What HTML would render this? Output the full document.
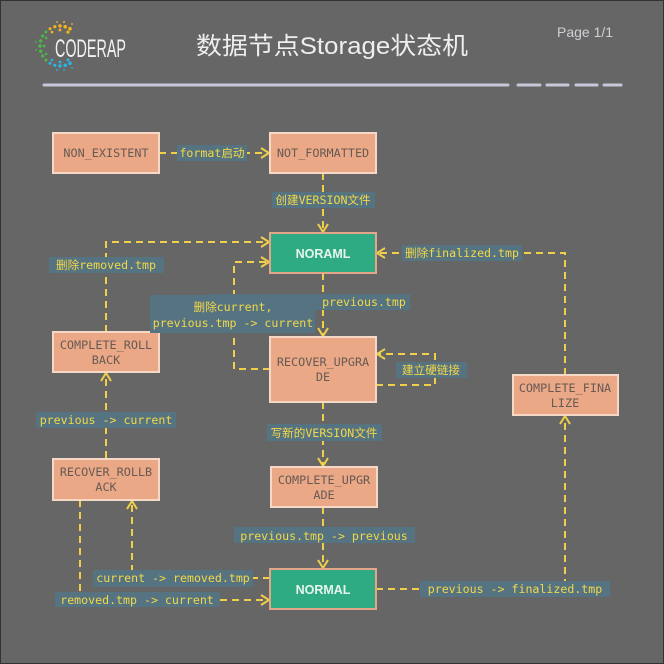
<!DOCTYPE html>
<html><head><meta charset="utf-8"><style>
html,body{margin:0;padding:0;background:#666}
svg{display:block}
.t{font-family:"DejaVu Sans Mono","Liberation Mono","Noto Sans CJK SC",monospace;font-size:11.6px;fill:#f5d848}
.b{font-family:"DejaVu Sans Mono","Liberation Mono",monospace;font-size:11.8px;fill:#665a54}
.g{font-family:"Liberation Sans",sans-serif;font-size:12.5px;font-weight:bold;fill:#e8f5ef}
.l{fill:#557380}
.bx{fill:#eba886;stroke:#f6d8c6;stroke-width:2}
.gb{fill:#2fab83;stroke:#e3a688;stroke-width:2}
.d{fill:none;stroke:#f0d048;stroke-width:2;stroke-dasharray:7 5}
</style></head><body>
<svg width="664" height="664" viewBox="0 0 664 664" xmlns="http://www.w3.org/2000/svg">
<defs>
<marker id="a" markerWidth="12" markerHeight="12" refX="10" refY="6" orient="auto" markerUnits="userSpaceOnUse">
<polyline points="2,1 10,6 2,11" fill="none" stroke="#f0d048" stroke-width="2"/>
</marker>
</defs>
<rect x="0.5" y="0.5" width="663" height="663" fill="#666" stroke="#333"/>
<g>
<g fill="#f2b51c"><circle cx="50" cy="28.7" r="1.5"/><circle cx="54.8" cy="26.7" r="1.6"/><circle cx="60" cy="26" r="1.7"/><circle cx="65.2" cy="26.7" r="1.8"/><circle cx="70" cy="28.7" r="1.8"/><circle cx="52" cy="32.1" r="1.3"/><circle cx="60" cy="30" r="1.4"/><circle cx="68" cy="32.1" r="1.6"/><circle cx="57" cy="22" r="0.9"/><circle cx="64" cy="22" r="1"/><circle cx="72" cy="24" r="0.9"/></g>
<g fill="#4cb848"><circle cx="45.9" cy="31.9" r="1.5"/><circle cx="42.7" cy="36" r="1.6"/><circle cx="40.7" cy="40.8" r="1.7"/><circle cx="40" cy="46" r="1.8"/><circle cx="40.7" cy="51.2" r="1.7"/><circle cx="42.7" cy="56" r="1.6"/><circle cx="45.9" cy="60.1" r="1.5"/><circle cx="46.1" cy="38" r="1.3"/><circle cx="44" cy="46" r="1.4"/><circle cx="46.1" cy="54" r="1.3"/><circle cx="36" cy="42" r="0.9"/><circle cx="36" cy="50" r="0.9"/></g>
<g fill="#2ab4e6"><circle cx="50" cy="63.3" r="1.5"/><circle cx="54.8" cy="65.3" r="1.6"/><circle cx="60" cy="66" r="1.7"/><circle cx="65.2" cy="65.3" r="1.8"/><circle cx="70" cy="63.3" r="1.8"/><circle cx="52" cy="59.9" r="1.3"/><circle cx="60" cy="62" r="1.4"/><circle cx="68" cy="59.9" r="1.5"/><circle cx="57" cy="70" r="0.9"/><circle cx="64" cy="70" r="0.9"/><circle cx="72" cy="68" r="0.9"/></g>
</g>
<text x="55" y="57" font-family="Liberation Sans,sans-serif" font-size="25" fill="#f2f2f2" textLength="71" lengthAdjust="spacingAndGlyphs">CODERAP</text>
<text x="196" y="54" font-family="Liberation Sans,'Noto Sans CJK SC',sans-serif" font-size="24" fill="#eeeeee" textLength="272" lengthAdjust="spacingAndGlyphs">数据节点Storage状态机</text>
<text x="557" y="37" font-family="Liberation Sans,sans-serif" font-size="14" fill="#cfcfd6">Page 1/1</text>
<line x1="44" y1="85" x2="508" y2="85" stroke="#c5c8d8" stroke-width="3" stroke-linecap="round"/>
<g stroke="#c5c8d8" stroke-width="3" stroke-linecap="round"><line x1="518" y1="85" x2="540" y2="85"/><line x1="547" y1="85" x2="568" y2="85"/><line x1="576" y1="85" x2="597" y2="85"/><line x1="604" y1="85" x2="621" y2="85"/></g>

<path class="d" d="M159 153 H269" marker-end="url(#a)"/>
<path class="d" d="M323 173 V232" marker-end="url(#a)"/>
<path class="d" d="M106 332 V242 H269" marker-end="url(#a)"/>
<path class="d" d="M270 369 H234 V262 H269" marker-end="url(#a)"/>
<path class="d" d="M323 273 V336" marker-end="url(#a)"/>
<path class="d" d="M376 385 H435 V354 H377" marker-end="url(#a)"/>
<path class="d" d="M323 402 V466" marker-end="url(#a)"/>
<path class="d" d="M323 507 V568" marker-end="url(#a)"/>
<path class="d" d="M376 589 H565 V416" marker-end="url(#a)"/>
<path class="d" d="M565 375 V253 H377" marker-end="url(#a)"/>
<path class="d" d="M106 458 V373" marker-end="url(#a)"/>
<path class="d" d="M270 578 H132 V501" marker-end="url(#a)"/>
<path class="d" d="M80 500 V600 H269" marker-end="url(#a)"/>

<rect class="bx" x="53" y="133" width="106" height="40"/><text class="b" x="106" y="157" text-anchor="middle">NON_EXISTENT</text>
<rect class="bx" x="270" y="133" width="106" height="40"/><text class="b" x="323" y="157" text-anchor="middle">NOT_FORMATTED</text>
<rect class="gb" x="270" y="233" width="106" height="40"/><text class="g" x="323" y="258" text-anchor="middle">NORAML</text>
<rect class="bx" x="270" y="337" width="106" height="65"/><text class="b" x="323" y="366" text-anchor="middle">RECOVER_UPGRA</text><text class="b" x="323" y="381" text-anchor="middle">DE</text>
<rect class="bx" x="53" y="332" width="106" height="40"/><text class="b" x="106" y="349" text-anchor="middle">COMPLETE_ROLL</text><text class="b" x="106" y="364" text-anchor="middle">BACK</text>
<rect class="bx" x="53" y="459" width="106" height="41"/><text class="b" x="106" y="476" text-anchor="middle">RECOVER_ROLLB</text><text class="b" x="106" y="491" text-anchor="middle">ACK</text>
<rect class="bx" x="271" y="467" width="106" height="40"/><text class="b" x="324" y="484" text-anchor="middle">COMPLETE_UPGR</text><text class="b" x="324" y="499" text-anchor="middle">ADE</text>
<rect class="bx" x="513" y="375" width="105" height="40"/><text class="b" x="565" y="392" text-anchor="middle">COMPLETE_FINA</text><text class="b" x="565" y="407" text-anchor="middle">LIZE</text>
<rect class="gb" x="270" y="569" width="106" height="40"/><text class="g" x="323" y="594" text-anchor="middle">NORMAL</text>

<rect class="l" x="177" y="145" width="70" height="16"/><text class="t" x="212" y="157" text-anchor="middle">format启动</text>
<rect class="l" x="272" y="192" width="103" height="16"/><text class="t" x="323" y="204" text-anchor="middle">创建VERSION文件</text>
<rect class="l" x="49" y="257" width="115" height="16"/><text class="t" x="106" y="269" text-anchor="middle">删除removed.tmp</text>
<rect class="l" x="402" y="245" width="120" height="16"/><text class="t" x="462" y="257" text-anchor="middle">删除finalized.tmp</text>
<rect class="l" x="208" y="294" width="202" height="16"/><text class="t" x="364" y="306" text-anchor="middle">previous.tmp</text>
<rect class="l" x="150" y="295" width="165" height="38"/><text class="t" x="233" y="311" text-anchor="middle">删除current,</text><text class="t" x="233" y="327" text-anchor="middle">previous.tmp -&gt; current</text>
<rect class="l" x="396" y="362" width="71" height="16"/><text class="t" x="431" y="374" text-anchor="middle">建立硬链接</text>
<rect class="l" x="36" y="412" width="140" height="16"/><text class="t" x="106" y="424" text-anchor="middle">previous -&gt; current</text>
<rect class="l" x="267" y="424" width="115" height="17"/><text class="t" x="324" y="437" text-anchor="middle">写新的VERSION文件</text>
<rect class="l" x="234" y="527" width="181" height="16"/><text class="t" x="324" y="540" text-anchor="middle">previous.tmp -&gt; previous</text>
<rect class="l" x="93" y="570" width="160" height="17"/><text class="t" x="173" y="582" text-anchor="middle">current -&gt; removed.tmp</text>
<rect class="l" x="55" y="592" width="165" height="15"/><text class="t" x="137" y="604" text-anchor="middle">removed.tmp -&gt; current</text>
<rect class="l" x="420" y="581" width="190" height="16"/><text class="t" x="515" y="593" text-anchor="middle">previous -&gt; finalized.tmp</text>
</svg>
</body></html>
